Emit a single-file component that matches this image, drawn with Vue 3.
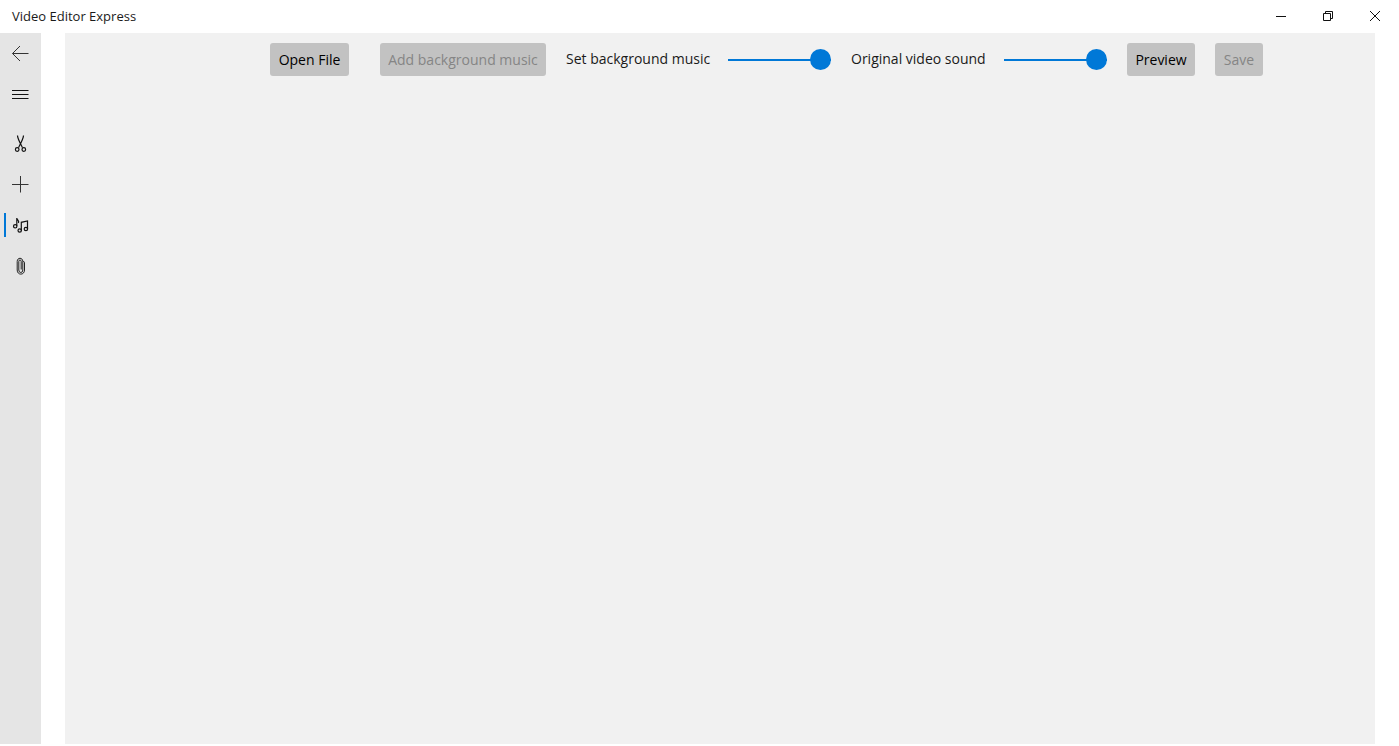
<script setup>
import { ref } from 'vue'

const musicVolume = ref(100)
const videoVolume = ref(100)
const active = ref('music')
const tools = [
  { id: 'cut', label: 'Cut video' },
  { id: 'add', label: 'Add clip' },
  { id: 'music', label: 'Background music' },
  { id: 'attach', label: 'Attachments' },
]
</script>

<template>
  <div class="window">
    <header class="titlebar">
      <h1>Video Editor Express</h1>
      <div class="window-controls">
        <button type="button" aria-label="Minimize">
          <svg viewBox="0 0 12 12"><path d="M1 6.5H11" /></svg>
        </button>
        <button type="button" aria-label="Restore">
          <svg viewBox="0 0 12 12"><path d="M1.5 3.5H8.5V10.5H1.5ZM3.5 3.5V1.5H10.5V8.5H8.5" /></svg>
        </button>
        <button type="button" aria-label="Close">
          <svg viewBox="0 0 12 12"><path d="M1 1L11 11M11 1L1 11" /></svg>
        </button>
      </div>
    </header>

    <div class="body">
      <nav class="rail" aria-label="Main">
        <button type="button" class="rail-item" aria-label="Back">
          <svg viewBox="0 0 20 20"><path d="M18.500 10.500H2.500M10 3L2.500 10.500L10 18" /></svg>
        </button>
        <button type="button" class="rail-item menu" aria-label="Menu">
          <svg viewBox="0 0 20 20" class="dark"><path d="M2 6.500H18.500M2 10.500H18.500M2 14.500H18.500" /></svg>
        </button>
        <button
          v-for="tool in tools"
          :key="tool.id"
          type="button"
          class="rail-item"
          :class="{ active: active === tool.id }"
          :aria-label="tool.label"
          @click="active = tool.id"
        >
          <svg v-if="tool.id === 'cut'" viewBox="0 0 20 20" class="dark">
            <path d="M7.500 2.500C7.500 5.500 9 8 12.500 14.500M13.500 2.500C13.500 5.500 12 8 8.500 14.500" />
            <circle cx="7.200" cy="16.500" r="1.800" />
            <circle cx="13.800" cy="16.500" r="1.800" />
          </svg>
          <svg v-else-if="tool.id === 'add'" viewBox="0 0 20 20"><path d="M2 10.500H18.500M10.500 2V18.500" /></svg>
          <svg v-else-if="tool.id === 'music'" viewBox="0 0 20 20" class="dark">
            <path d="M6.800 11V3C6.800 5 9.500 5.300 8.500 8M11.300 15.500V7.300L17.500 6V14" />
            <circle cx="5.200" cy="11.300" r="1.700" />
            <circle cx="9.700" cy="15.500" r="1.700" />
            <circle cx="15.900" cy="14" r="1.700" />
          </svg>
          <svg v-else viewBox="0 0 20 20" class="clip">
            <path d="M12.800 5.500V14A2 2.500 0 0 1 8.800 14V5.300A1.200 1.300 0 0 1 11.200 5.300V13.500M12.800 5.500C14.500 5.500 14.500 6 14.500 7V14C14.500 19.500 7.200 19.500 7.200 14V5.500C7.200 1.200 12.800 1.200 12.800 5.500" />
          </svg>
        </button>
      </nav>

      <main class="workspace">
        <div class="toolbar">
          <button type="button" class="btn open">Open File</button>
          <button type="button" class="btn add" disabled>Add background music</button>
          <label for="music-volume" class="music-label">Set background music</label>
          <input id="music-volume" v-model="musicVolume" type="range" min="0" max="100" />
          <label for="video-volume" class="video-label">Original video sound</label>
          <input id="video-volume" v-model="videoVolume" type="range" min="0" max="100" />
          <button type="button" class="btn preview">Preview</button>
          <button type="button" class="btn save" disabled>Save</button>
        </div>
      </main>
    </div>
  </div>
</template>

<style>
body {
  margin: 0;
}
</style>

<style scoped>
.window {
  display: flex;
  flex-direction: column;
  min-height: 100vh;
  background: #fff;
  color: #1a1a1a;
  font-family: "Segoe UI", "Open Sans", "Noto Sans", sans-serif;
  font-size: 14px;
}

button {
  padding: 0;
  border: 0;
  background: none;
  color: inherit;
  font: inherit;
}

svg {
  display: block;
  fill: none;
  stroke: #333;
  stroke-width: 1;
}

.titlebar {
  display: flex;
  justify-content: space-between;
  height: 33px;
}

h1 {
  margin: 0 0 0 12px;
  font-size: 13px;
  font-weight: 400;
  line-height: 32px;
}

.window-controls {
  display: flex;
  margin-right: 1px;
}

.window-controls button {
  display: grid;
  place-items: center;
  width: 47px;
  height: 32px;
}

.window-controls svg {
  width: 12px;
  height: 12px;
  stroke: #111;
}

.body {
  display: flex;
  flex: 1;
  padding-bottom: 2px;
}

.rail {
  display: flex;
  flex-direction: column;
  width: 41px;
  background: #e5e5e5;
}

.rail-item {
  display: grid;
  place-items: center;
  position: relative;
  box-sizing: border-box;
  width: 41px;
  height: 41px;
  padding: 0 1px 1px 0;
}

.rail-item svg {
  width: 20px;
  height: 20px;
}

.rail-item svg.dark {
  stroke: #111;
  stroke-width: 1.2;
}

.rail-item svg.clip {
  stroke: #222;
}

.menu {
  margin-bottom: 8px;
}

.active::before {
  content: "";
  position: absolute;
  top: 8px;
  left: 4px;
  width: 2px;
  height: 24px;
  background: #0078d7;
}

.workspace {
  flex: 1;
  margin: 0 24px;
  background: #f1f1f1;
}

.toolbar {
  display: flex;
  align-items: center;
  justify-content: center;
  gap: 20px;
  padding: 10px 0 0 93px;
  white-space: nowrap;
}

.btn {
  height: 33px;
  border-radius: 3px;
  background: #c2c2c2;
  color: #000;
  line-height: 33px;
}

.btn:disabled {
  color: #858585;
}

.open {
  width: 79px;
  margin-right: 11px;
}

.add {
  width: 166px;
}

.preview {
  width: 68px;
}

.save {
  width: 48px;
}

label {
  line-height: 31px;
  padding-bottom: 2px;
}

.music-label {
  width: 142px;
}

.video-label {
  width: 133px;
}

input[type="range"] {
  appearance: none;
  width: 103px;
  height: 21px;
  margin: 0;
  background: transparent;
}

input[type="range"]::-webkit-slider-runnable-track {
  height: 2px;
  background: #0078d7;
}

input[type="range"]::-webkit-slider-thumb {
  appearance: none;
  width: 21px;
  height: 21px;
  margin-top: -10px;
  border: 0;
  border-radius: 50%;
  background: #0078d7;
}
</style>
